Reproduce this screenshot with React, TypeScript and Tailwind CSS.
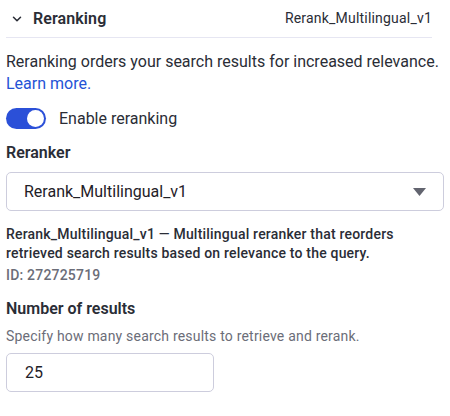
import { ChevronDown } from "lucide-react";

const font = { fontFamily: "Roboto, 'Noto Sans', sans-serif" };

const App = () => {
  return (
    <div className="w-[450px] h-[416px] bg-white text-[#2a2d36] px-[6px]" style={font}>
      {/* Header */}
      <div className="flex items-center justify-between h-[38px] border-b border-[#e6e6f2] mr-[12px]">
        <div className="flex items-center gap-[9px] pl-[4px]">
          <ChevronDown className="w-[14px] h-[14px] text-[#2a2d36]" strokeWidth={2.6} />
          <span className="text-[16px] font-semibold tracking-[0.1px]">Reranking</span>
        </div>
        <span className="text-[14px] tracking-[0.2px]">Rerank_Multilingual_v1</span>
      </div>

      {/* Description */}
      <p className="mt-[13px] text-[16px] leading-[22px] whitespace-nowrap">
        Reranking orders your search results for increased relevance.
        <a className="block text-[#2453d6]">Learn more.</a>
      </p>

      {/* Toggle */}
      <div className="flex items-center gap-[13px] mt-[13px] h-[21px]">
        <div className="w-[40px] h-[21px] rounded-full bg-[#2b50d8] flex items-center justify-end pr-[2px]">
          <div className="w-[17px] h-[17px] rounded-full bg-white" />
        </div>
        <span className="text-[16px]">Enable reranking</span>
      </div>

      {/* Reranker */}
      <div className="mt-[12px] text-[16px] leading-[24px] font-semibold">Reranker</div>
      <div className="mt-[7px] h-[39px] rounded-[5px] border border-[#cdcddd] flex items-center justify-between pl-[17px] pr-[17px]">
        <span className="text-[16px] text-[#1f2128]">Rerank_Multilingual_v1</span>
        <svg width="13" height="8" viewBox="0 0 13 8">
          <path d="M0 0h13L6.5 8z" fill="#62646f" />
        </svg>
      </div>
      <p className="mt-[14px] text-[14px] leading-[19px] font-medium tracking-[0.2px] whitespace-nowrap">
        Rerank_Multilingual_v1 — Multilingual reranker that reorders
        <br />
        retrieved search results based on relevance to the query.
      </p>
      <p className="mt-[3px] text-[14px] leading-[19px] font-medium tracking-[0.2px] text-[#6b6d78]">ID: 272725719</p>

      {/* Number of results */}
      <div className="mt-[12px] text-[16px] leading-[24px] font-semibold">Number of results</div>
      <p className="mt-[5px] text-[14px] leading-[20px] tracking-[0.2px] text-[#6b6d78]">
        Specify how many search results to retrieve and rerank.
      </p>
      <div className="mt-[7px] w-[208px] h-[39px] rounded-[5px] border border-[#cdcddd] flex items-center pl-[18px] text-[16px] text-[#1f2128]">
        25
      </div>
    </div>
  );
};

export default App;
